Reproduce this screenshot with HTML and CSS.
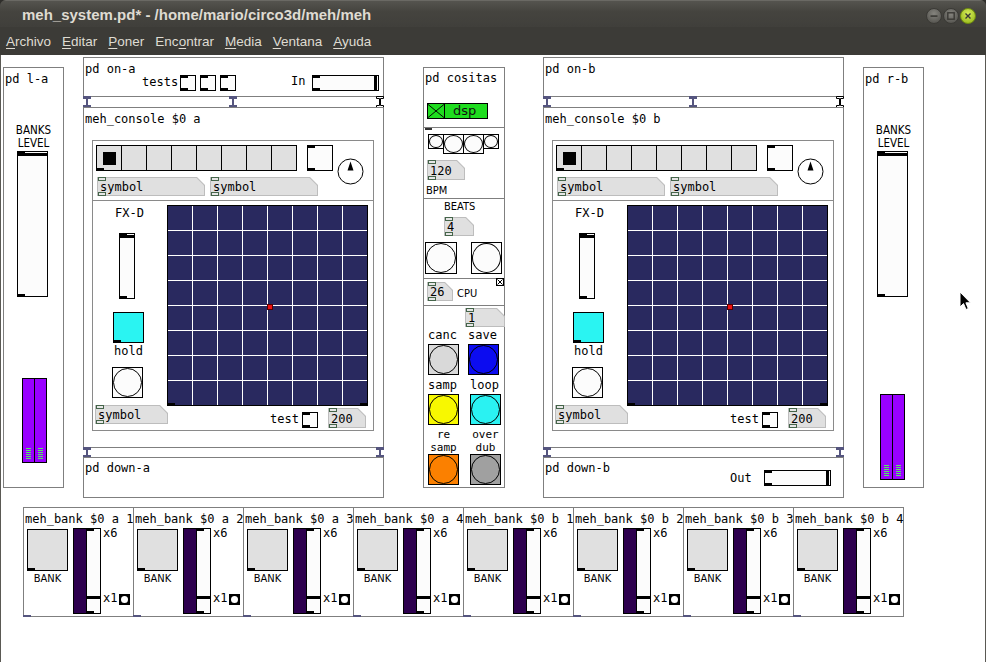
FILE: index.html
```html
<!DOCTYPE html>
<html>
<head>
<meta charset="utf-8">
<link rel="stylesheet" href="styles.css">
</head>
<body>
<div class="window">
  <div class="titlebar">
    <span class="title">meh_system.pd* - /home/mario/circo3d/meh/meh</span>
    <div class="wbtns">
      <svg class="wb" width="16" height="16" viewBox="0 0 16 16"><defs><radialGradient id="gg" cx="50%" cy="35%" r="65%"><stop offset="0" stop-color="#85847e"/><stop offset="1" stop-color="#55544f"/></radialGradient><radialGradient id="lg" cx="50%" cy="35%" r="65%"><stop offset="0" stop-color="#d6ec5a"/><stop offset="1" stop-color="#9cbc1e"/></radialGradient></defs><circle cx="8" cy="8" r="7.5" fill="url(#gg)" stroke="#3a3935"/><rect x="4.5" y="7.3" width="7" height="1.6" fill="#3a3935"/></svg>
      <svg class="wb" width="16" height="16" viewBox="0 0 16 16"><circle cx="8" cy="8" r="7.5" fill="url(#gg)" stroke="#3a3935"/><rect x="4.8" y="4.8" width="6.4" height="6.4" fill="none" stroke="#3a3935" stroke-width="1.4"/></svg>
      <svg class="wb" width="16" height="16" viewBox="0 0 16 16"><circle cx="8" cy="8" r="7.5" fill="url(#lg)" stroke="#6f8a12"/><path d="M5.5 5.5l5 5M10.5 5.5l-5 5" stroke="#3a3935" stroke-width="1.4"/></svg>
    </div>
  </div>
  <div class="menubar">
    <span><u>A</u>rchivo</span>
    <span><u>E</u>ditar</span>
    <span><u>P</u>oner</span>
    <span>Enc<u>o</u>ntrar</span>
    <span><u>M</u>edia</span>
    <span><u>V</u>entana</span>
    <span><u>A</u>yuda</span>
  </div>
  <div class="canvas">

    <!-- pd l-a -->
    <div class="obj side la">
      <span class="t head">pd l-a</span>
      <span class="s banks b1">BANKS</span>
      <span class="s banks b2">LEVEL</span>
      <div class="vsl vsl-big io"><i class="kh kh-top"></i></div>
      <div class="vu vu-la"><i></i><i></i></div>
    </div>

    <!-- pd on-a -->
    <div class="obj onbox on-a">
      <span class="t head">pd on-a</span>
      <span class="t tests-lbl">tests</span>
      <div class="tgl io tg1"></div>
      <div class="tgl io tg2"></div>
      <div class="tgl io tg3"></div>
      <span class="t in-lbl">In</span>
      <div class="hsl io hsl-in"><i class="kv"></i></div>
    </div>

    <svg class="conn c-on-a1" width="8" height="12" viewBox="0 0 8 12"><path d="M0 0h8v3H5v6h3v3H0V9h3V3H0z"/></svg>
    <svg class="conn c-on-a2" width="8" height="12" viewBox="0 0 8 12"><path d="M0 0h8v3H5v6h3v3H0V9h3V3H0z"/></svg>
    <svg class="conn hollow c-on-a3" width="8" height="12" viewBox="0 0 8 12"><path d="M0.5 0.5h7v2h-3v7h3v2h-7v-2h3v-7h-3z"/></svg>

    <!-- meh_console a -->
    <div class="obj console con-a">
      <span class="t head">meh_console $0 a</span>
      <div class="panel">
        <div class="hr-line"></div>
        <div class="hrd io-out"><i class="on"></i><i></i><i></i><i></i><i></i><i></i><i></i><i></i></div>
        <div class="tgl io tgl-big"></div>
        <svg class="knob" width="27" height="27" viewBox="0 0 27 27"><circle cx="13.5" cy="13.5" r="12.5" fill="#fff" stroke="#000"/><path d="M13.5 3.5L10.5 12.5H16.5Z"/></svg>
        <div class="atom sym1"><b class="an an-t"></b><b class="an an-b"></b><span>symbol</span></div>
        <div class="atom sym2"><b class="an an-t"></b><b class="an an-b"></b><span>symbol</span></div>
        <span class="t fxd">FX-D</span>
        <div class="vsl io vsl-fx"><i class="kh kh-top"></i></div>
        <div class="tgl io-out cyan"></div>
        <span class="t hold">hold</span>
        <div class="bng bng-fx"></div>
        <div class="xy"><i class="xy-nl"></i><i class="xy-nr"></i></div>
        <div class="dot"></div>
        <div class="atom sym3"><b class="an an-t"></b><b class="an an-b"></b><span>symbol</span></div>
        <span class="t test-lbl">test</span>
        <div class="tgl io tgl-test"></div>
        <div class="atom num200"><b class="an an-t"></b><b class="an an-b"></b><span>200</span></div>
      </div>
    </div>

    <svg class="conn c-dn-a1" width="8" height="11" viewBox="0 0 8 11"><path d="M0 0h8v3H5v5h3v3H0V8h3V3H0z"/></svg>
    <svg class="conn c-dn-a2" width="8" height="11" viewBox="0 0 8 11"><path d="M0 0h8v3H5v5h3v3H0V8h3V3H0z"/></svg>

    <!-- pd down-a -->
    <div class="obj downbox down-a">
      <span class="t head2">pd down-a</span>
    </div>

    <!-- pd cositas -->
    <div class="obj cos">
      <span class="t head2">pd cositas</span>
      <div class="dsp"><svg width="17" height="14" viewBox="0 0 17 14"><path d="M0 0L17 14M17 0L0 14" stroke="#000" stroke-width="1" fill="none"/></svg><span>dsp</span></div>
      <div class="sep sep1"></div>
      <i class="nub-k nub-cos"></i>
      <div class="bng b-r1"></div>
      <div class="bng b-r2"></div>
      <div class="bng b-r3"></div>
      <div class="bng b-r4"></div>
      <div class="atom n120"><b class="an an-t"></b><b class="an an-b"></b><span>120</span></div>
      <span class="s bpm">BPM</span>
      <div class="sep sep2"></div>
      <span class="s beats">BEATS</span>
      <div class="atom n4"><b class="an an-t"></b><b class="an an-b"></b><span>4</span></div>
      <div class="bng b-beat1"></div>
      <div class="bng b-beat2"></div>
      <div class="sep sep3"></div>
      <div class="atom n26"><b class="an an-t"></b><b class="an an-b"></b><span>26</span></div>
      <span class="s cpu">CPU</span>
      <svg class="xtgl" width="8" height="8" viewBox="0 0 8 8"><rect x="0.5" y="0.5" width="7" height="7" fill="#fff" stroke="#000"/><path d="M1.5 1.5l5 5M6.5 1.5l-5 5" stroke="#000"/></svg>
      <div class="sep sep4"></div>
      <div class="atom n1"><b class="an an-t"></b><b class="an an-b"></b><span>1</span></div>
      <span class="t cl c-canc">canc</span>
      <span class="t cl c-save">save</span>
      <div class="bng big-b canc"></div>
      <div class="bng big-b save"></div>
      <span class="t cl c-samp">samp</span>
      <span class="t cl c-loop">loop</span>
      <div class="bng big-b samp"></div>
      <div class="bng big-b loop"></div>
      <span class="t cl2 c-re">re</span>
      <span class="t cl3 c-resamp2">samp</span>
      <span class="t cl2 c-over">over</span>
      <span class="t cl3 c-dub">dub</span>
      <div class="bng big-b resamp"></div>
      <div class="bng big-b overdub"></div>
    </div>

    <!-- pd on-b -->
    <div class="obj onbox on-b">
      <span class="t head">pd on-b</span>
    </div>

    <svg class="conn c-on-b1" width="8" height="12" viewBox="0 0 8 12"><path d="M0 0h8v3H5v6h3v3H0V9h3V3H0z"/></svg>
    <svg class="conn c-on-b2" width="8" height="12" viewBox="0 0 8 12"><path d="M0 0h8v3H5v6h3v3H0V9h3V3H0z"/></svg>
    <svg class="conn hollow c-on-b3" width="8" height="12" viewBox="0 0 8 12"><path d="M0.5 0.5h7v2h-3v7h3v2h-7v-2h3v-7h-3z"/></svg>

    <!-- meh_console b -->
    <div class="obj console con-b">
      <span class="t head">meh_console $0 b</span>
      <div class="panel">
        <div class="hr-line"></div>
        <div class="hrd io-out"><i class="on"></i><i></i><i></i><i></i><i></i><i></i><i></i><i></i></div>
        <div class="tgl io tgl-big"></div>
        <svg class="knob" width="27" height="27" viewBox="0 0 27 27"><circle cx="13.5" cy="13.5" r="12.5" fill="#fff" stroke="#000"/><path d="M13.5 3.5L10.5 12.5H16.5Z"/></svg>
        <div class="atom sym1"><b class="an an-t"></b><b class="an an-b"></b><span>symbol</span></div>
        <div class="atom sym2"><b class="an an-t"></b><b class="an an-b"></b><span>symbol</span></div>
        <span class="t fxd">FX-D</span>
        <div class="vsl io vsl-fx"><i class="kh kh-top"></i></div>
        <div class="tgl io-out cyan"></div>
        <span class="t hold">hold</span>
        <div class="bng bng-fx"></div>
        <div class="xy"><i class="xy-nl"></i><i class="xy-nr"></i></div>
        <div class="dot"></div>
        <div class="atom sym3"><b class="an an-t"></b><b class="an an-b"></b><span>symbol</span></div>
        <span class="t test-lbl">test</span>
        <div class="tgl io tgl-test"></div>
        <div class="atom num200"><b class="an an-t"></b><b class="an an-b"></b><span>200</span></div>
      </div>
    </div>

    <svg class="conn c-dn-b1" width="8" height="11" viewBox="0 0 8 11"><path d="M0 0h8v3H5v5h3v3H0V8h3V3H0z"/></svg>
    <svg class="conn c-dn-b2" width="8" height="11" viewBox="0 0 8 11"><path d="M0 0h8v3H5v5h3v3H0V8h3V3H0z"/></svg>

    <!-- pd down-b -->
    <div class="obj downbox down-b">
      <span class="t head2">pd down-b</span>
      <span class="t out-lbl">Out</span>
      <div class="hsl io hsl-out"><i class="kv"></i></div>
    </div>

    <!-- pd r-b -->
    <div class="obj side rb">
      <span class="t head">pd r-b</span>
      <span class="s banks b1">BANKS</span>
      <span class="s banks b2">LEVEL</span>
      <div class="vsl vsl-big io"><i class="kh kh-top"></i></div>
      <div class="vu vu-rb"><i></i><i></i></div>
    </div>

    <!-- banks -->
    <div class="bank-row">
      <div class="bank"><span class="t head">meh_bank $0 a 1</span><div class="bk-sq io-out"></div><span class="s bk-lbl">BANK</span><div class="bk-meter"></div><div class="vsl io bk-vsl"><i class="kh bk-knob"></i></div><span class="t bk-x6">x6</span><span class="t bk-x1">x1</span><div class="bk-bng"></div><i class="bnub"></i></div>
      <div class="bank"><span class="t head">meh_bank $0 a 2</span><div class="bk-sq io-out"></div><span class="s bk-lbl">BANK</span><div class="bk-meter"></div><div class="vsl io bk-vsl"><i class="kh bk-knob"></i></div><span class="t bk-x6">x6</span><span class="t bk-x1">x1</span><div class="bk-bng"></div><i class="bnub"></i></div>
      <div class="bank"><span class="t head">meh_bank $0 a 3</span><div class="bk-sq io-out"></div><span class="s bk-lbl">BANK</span><div class="bk-meter"></div><div class="vsl io bk-vsl"><i class="kh bk-knob"></i></div><span class="t bk-x6">x6</span><span class="t bk-x1">x1</span><div class="bk-bng"></div><i class="bnub"></i></div>
      <div class="bank"><span class="t head">meh_bank $0 a 4</span><div class="bk-sq io-out"></div><span class="s bk-lbl">BANK</span><div class="bk-meter"></div><div class="vsl io bk-vsl"><i class="kh bk-knob"></i></div><span class="t bk-x6">x6</span><span class="t bk-x1">x1</span><div class="bk-bng"></div><i class="bnub"></i></div>
      <div class="bank"><span class="t head">meh_bank $0 b 1</span><div class="bk-sq io-out"></div><span class="s bk-lbl">BANK</span><div class="bk-meter"></div><div class="vsl io bk-vsl"><i class="kh bk-knob"></i></div><span class="t bk-x6">x6</span><span class="t bk-x1">x1</span><div class="bk-bng"></div><i class="bnub"></i></div>
      <div class="bank"><span class="t head">meh_bank $0 b 2</span><div class="bk-sq io-out"></div><span class="s bk-lbl">BANK</span><div class="bk-meter"></div><div class="vsl io bk-vsl"><i class="kh bk-knob"></i></div><span class="t bk-x6">x6</span><span class="t bk-x1">x1</span><div class="bk-bng"></div><i class="bnub"></i></div>
      <div class="bank"><span class="t head">meh_bank $0 b 3</span><div class="bk-sq io-out"></div><span class="s bk-lbl">BANK</span><div class="bk-meter"></div><div class="vsl io bk-vsl"><i class="kh bk-knob"></i></div><span class="t bk-x6">x6</span><span class="t bk-x1">x1</span><div class="bk-bng"></div><i class="bnub"></i></div>
      <div class="bank"><span class="t head">meh_bank $0 b 4</span><div class="bk-sq io-out"></div><span class="s bk-lbl">BANK</span><div class="bk-meter"></div><div class="vsl io bk-vsl"><i class="kh bk-knob"></i></div><span class="t bk-x6">x6</span><span class="t bk-x1">x1</span><div class="bk-bng"></div><i class="bnub"></i></div>
    </div>

    <svg class="cursor" width="13" height="20" viewBox="0 0 13 20"><path d="M1 1V16L4.5 12.6L7 18.5L9.3 17.5L6.9 11.8H11.5Z" fill="#000" stroke="#fff" stroke-width="1"/></svg>
  </div>
</div>
</body>
</html>
```

FILE: styles.css
```css
* { box-sizing: border-box; }
html, body { margin: 0; padding: 0; }
body { width: 986px; height: 662px; overflow: hidden; background: #2f2e2b; }

.window { width: 986px; height: 662px; display: flex; flex-direction: column; border-radius: 6px 6px 0 0; overflow: hidden; background: #3c3b37; }

.titlebar { height: 27px; flex: none; display: flex; align-items: center; background: linear-gradient(#55544f, #45443f 40%, #403f3b); border-top: 1px solid #6a6964; }
.title { margin-left: 22px; font: bold 15px "Liberation Sans", sans-serif; color: #dfdbd2; }
.wbtns { margin-left: auto; margin-right: 10px; display: flex; gap: 1px; margin-top: 3px; }
.wb { display: block; }

.menubar { height: 28px; flex: none; display: flex; align-items: center; gap: 11px; padding-left: 6px; font: 13.5px "Liberation Sans", sans-serif; color: #dfdbd2; background: #3c3b37; }
.menubar u { text-underline-offset: 2px; }

.canvas { position: relative; flex: 1; background: #fff; box-shadow: inset 1px 0 #5a5954, inset -1px 0 #5a5954; }

/* generic pd objects */
.obj { position: absolute; background: #fff; box-shadow: inset 0 0 0 1px #7f7f7f; }
.t { position: absolute; font: 12px/14px "DejaVu Sans Mono", monospace; color: #000; white-space: pre; }
.s { position: absolute; font: 11px/12px "DejaVu Sans Condensed", "DejaVu Sans", sans-serif; font-stretch: condensed; color: #000; white-space: pre; }
.head { left: 2px; top: 5px; }
.head2 { left: 2px; top: 4px; }

.io::before, .io::after, .io-out::after { content: ""; position: absolute; left: 0; width: 7px; height: 2px; background: #000; }
.io::before { top: 0; }
.io::after, .io-out::after { bottom: 0; }

.vsl { position: absolute; border: 1px solid #000; background: #fcfcfc; }
.hsl { position: absolute; border: 1px solid #000; background: #fcfcfc; }
.kh { position: absolute; left: 0; right: 0; height: 3px; background: #000; }
.kh-top { top: 1px; }
.kv { position: absolute; top: 0; bottom: 0; right: 1px; width: 3px; background: #000; }
.tgl { position: absolute; border: 1px solid #000; background: #fcfcfc; }
.bng { position: absolute; border: 1px solid #000; background: #fcfcfc; }
.bng::after { content: ""; position: absolute; inset: 0; border: 1px solid #000; border-radius: 50%; }

/* side meters */
.side { top: 12px; width: 61px; height: 421px; }
.la { left: 3px; }
.rb { left: 863px; }
.banks { left: 0; right: 0; text-align: center; font-size: 11.5px; line-height: 12px; }
.b1 { top: 57px; }
.b2 { top: 70px; }
.vsl-big { left: 14px; top: 84px; width: 31px; height: 146px; }
.vu { position: absolute; display: flex; gap: 1px; background: #000; border: 1px solid #000; width: 25px; height: 85px; }
.vu i { flex: 1; background: #9900ff; position: relative; }
.vu i::after { content: ""; position: absolute; left: 3px; right: 3px; bottom: 2px; height: 12px; background: repeating-linear-gradient(#55e866 0 1px, transparent 1px 2px); }
.vu-la { left: 19px; top: 311px; }
.vu-rb { left: 17px; top: 327px; height: 86px; }

/* on boxes */
.onbox { top: 2px; width: 301px; height: 40px; }
.on-a { left: 83px; }
.on-b { left: 543px; }
.tests-lbl { left: 59px; top: 18px; }
.tg1, .tg2, .tg3 { top: 18px; width: 16px; height: 16px; }
.tg1 { left: 97px; }
.tg2 { left: 117px; }
.tg3 { left: 137px; }
.in-lbl { left: 208px; top: 17px; }
.hsl-in { left: 229px; top: 18px; width: 67px; height: 16px; }

/* connections */
.conn { position: absolute; fill: #55557f; }
.conn.hollow { fill: none; stroke: #000; stroke-width: 1; }
.c-on-a1, .c-on-a2, .c-on-a3, .c-on-b1, .c-on-b2, .c-on-b3 { top: 41px; }
.c-on-a1 { left: 83px; }
.c-on-a2 { left: 229px; }
.c-on-a3 { left: 376px; }
.c-on-b1 { left: 543px; }
.c-on-b2 { left: 689px; }
.c-on-b3 { left: 836px; }
.c-dn-a1, .c-dn-a2, .c-dn-b1, .c-dn-b2 { top: 392px; }
.c-dn-a1 { left: 83px; }
.c-dn-a2 { left: 376px; }
.c-dn-b1 { left: 543px; }
.c-dn-b2 { left: 836px; }

/* consoles */
.console { top: 52px; width: 301px; height: 341px; }
.con-a { left: 83px; }
.con-b { left: 543px; }
.panel { position: absolute; left: 9px; top: 33px; width: 282px; height: 291px; box-shadow: inset 0 0 0 1px #8a8a8a; }
.hr-line { position: absolute; left: 0; right: 0; top: 60px; height: 1px; background: #8a8a8a; }
.hrd { position: absolute; left: 4px; top: 5px; width: 201px; height: 26px; display: flex; border: 1px solid #000; border-right: none; }
.hrd i { flex: none; width: 25px; border-right: 1px solid #000; background: #e0e0e0; position: relative; }
.hrd i.on::after { content: ""; position: absolute; left: 6px; top: 6px; width: 13px; height: 13px; background: #000; }
.tgl-big { left: 215px; top: 5px; width: 26px; height: 26px; }
.knob { position: absolute; left: 245px; top: 18px; }

.atom { position: absolute; height: 19px; background: #bdbdbd; clip-path: polygon(0 0, calc(100% - 8px) 0, 100% 8px, 100% 100%, 0 100%); font: 12px/19px "DejaVu Sans Mono", monospace; color: #000; white-space: pre; }
.atom::before { content: ""; position: absolute; inset: 1px; background: #e0e0e0; clip-path: polygon(0 0, calc(100% - 7.5px) 0, 100% 7.5px, 100% 100%, 0 100%); }
.atom span { position: relative; top: 1px; padding-left: 3px; }
.an { position: absolute; left: 1px; width: 8px; height: 4px; border: 1px solid #45654a; background: #e6e6e6; z-index: 1; }
.an-t { top: 0; }
.an-b { bottom: 0; }
.sym1 { left: 5px; top: 37px; width: 108px; }
.sym2 { left: 118px; top: 37px; width: 108px; }
.sym3 { left: 3px; top: 265px; width: 73px; }
.num200 { left: 236px; top: 268px; width: 38px; height: 20px; line-height: 20px; }

.fxd { left: 23px; top: 66px; }
.vsl-fx { left: 27px; top: 93px; width: 16px; height: 66px; }
.cyan { left: 21px; top: 172px; width: 31px; height: 31px; background: #2af4f2; }
.hold { left: 22px; top: 204px; }
.bng-fx { left: 20px; top: 227px; width: 31px; height: 31px; }
.xy { position: absolute; left: 75px; top: 65px; width: 201px; height: 201px; border: 1px solid #000; background-color: #29295f; background-image: repeating-linear-gradient(to right, transparent 0 24px, #fff 24px 25px), repeating-linear-gradient(to bottom, transparent 0 24px, #fff 24px 25px); }
.xy-nl, .xy-nr { position: absolute; bottom: -1px; width: 8px; height: 3px; background: #000; }
.xy-nl { left: -1px; }
.xy-nr { right: -1px; }
.dot { position: absolute; left: 175px; top: 164px; width: 6px; height: 6px; background: #ee1111; border: 1px solid #500; }
.test-lbl { left: 178px; top: 272px; }
.tgl-test { left: 210px; top: 272px; width: 16px; height: 16px; }

/* down boxes */
.downbox { top: 402px; width: 301px; height: 41px; }
.down-a { left: 83px; }
.down-b { left: 543px; }
.out-lbl { left: 187px; top: 14px; }
.hsl-out { left: 221px; top: 13px; width: 67px; height: 16px; }

/* cositas */
.cos { left: 423px; top: 12px; width: 82px; height: 421px; overflow: hidden; }
.dsp { position: absolute; left: 4px; top: 36px; width: 61px; height: 16px; border: 1px solid #000; background: #1fdd1f; display: flex; align-items: center; }
.dsp svg { display: block; border-right: 1px solid #000; }
.dsp span { margin-left: 8px; font: 13px/14px "DejaVu Sans", sans-serif; color: #111; }
.sep { position: absolute; left: 0; right: 0; height: 1px; background: #7f7f7f; }
.sep1 { top: 60px; }
.sep2 { top: 131px; }
.sep3 { top: 211px; }
.sep4 { top: 238px; }
.nub-k { position: absolute; width: 7px; height: 2px; background: #333; }
.nub-cos { left: 2px; top: 61px; }
.b-r1 { left: 5px; top: 67px; width: 16px; height: 15px; }
.b-r2 { left: 20px; top: 67px; width: 21px; height: 20px; }
.b-r3 { left: 40px; top: 67px; width: 21px; height: 20px; }
.b-r4 { left: 60px; top: 67px; width: 16px; height: 15px; }
.n120 { left: 4px; top: 93px; width: 38px; height: 20px; line-height: 20px; }
.bpm { left: 3px; top: 118px; }
.beats { left: 21px; top: 134px; }
.n4 { left: 21px; top: 150px; width: 30px; }
.b-beat1 { left: 2px; top: 175px; width: 32px; height: 32px; }
.b-beat2 { left: 48px; top: 175px; width: 31px; height: 32px; }
.n26 { left: 4px; top: 215px; width: 26px; }
.cpu { left: 34px; top: 221px; }
.xtgl { position: absolute; left: 73px; top: 211px; }
.n1 { left: 42px; top: 241px; width: 40px; }
.cl { top: 261px; }
.c-canc { left: 5px; }
.c-save { left: 45px; }
.big-b { width: 31px; height: 31px; }
.canc { left: 5px; top: 277px; background: #d9d9d9; }
.save { left: 45px; top: 277px; background: #0c0cf0; }
.c-samp { left: 5px; top: 311px; }
.c-loop { left: 47px; top: 311px; }
.samp { left: 5px; top: 327px; background: #f8f800; }
.loop { left: 47px; top: 327px; background: #2af2f2; }
.cl2, .cl3 { width: 31px; text-align: center; font-size: 11px; line-height: 13px; }
.cl2 { top: 361px; }
.cl3 { top: 374px; }
.c-re, .c-resamp2 { left: 5px; }
.c-over, .c-dub { left: 47px; }
.resamp { left: 5px; top: 387px; background: #fb8000; }
.overdub { left: 47px; top: 387px; background: #a0a0a0; }

/* bank row */
.bank-row { position: absolute; left: 23px; top: 452px; display: flex; }
.bank { position: relative; width: 111px; height: 110px; margin-right: -1px; background: #fff; box-shadow: inset 0 0 0 1px #7f7f7f; }
.bk-sq { position: absolute; left: 4px; top: 22px; width: 41px; height: 42px; background: #e0e0e0; border: 1px solid #000; }
.bk-lbl { left: 4px; width: 41px; top: 66px; text-align: center; }
.bk-meter { position: absolute; left: 50px; top: 21px; width: 14px; height: 86px; background: #2d004e; border: 1px solid #000; }
.bk-vsl { left: 63px; top: 21px; width: 15px; height: 86px; }
.bk-knob { top: 67px; }
.bk-x6 { left: 80px; top: 19px; }
.bk-x1 { left: 80px; top: 84px; }
.bk-bng { position: absolute; left: 96px; top: 87px; width: 11px; height: 11px; background: #000; }
.bk-bng::after { content: ""; position: absolute; inset: 2px; border-radius: 50%; background: #fff; }
.bnub { position: absolute; left: 0; bottom: 0; width: 8px; height: 2px; background: #55557f; }

.cursor { position: absolute; left: 959px; top: 236px; }
```
